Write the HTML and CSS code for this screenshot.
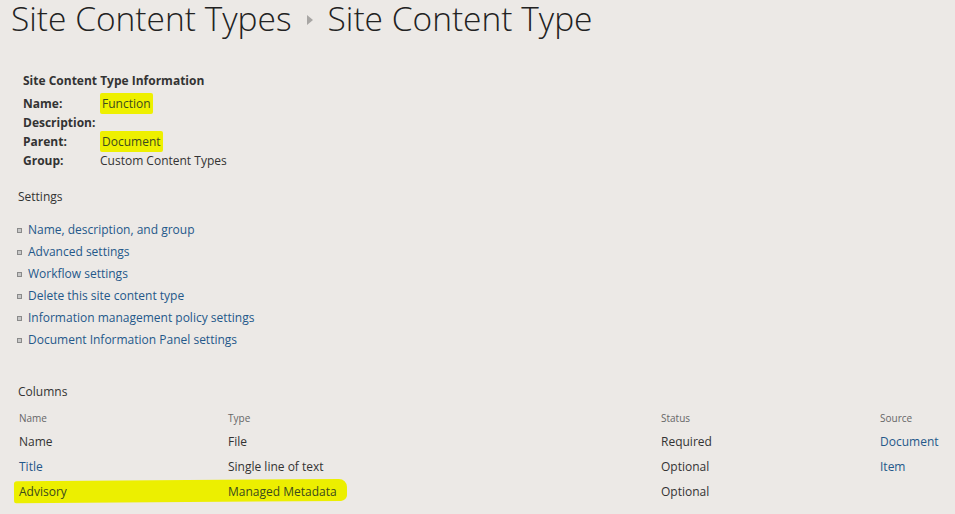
FILE: index.html
```html
<!DOCTYPE html>
<html lang="en">
<head>
    <meta charset="UTF-8">
    <title>Site Content Type</title>
    <link rel="stylesheet" href="styles.css">
</head>
<body>

    <h1 class="page-title">
        <span>Site Content Types</span>
        <svg class="crumb-arrow" width="6" height="10" viewBox="0 0 6 10"><path d="M0 0 L6 5 L0 10 Z" fill="#a8a6a4"/></svg>
        <span>Site Content Type</span>
    </h1>

    <div class="info">
        <h3>Site Content Type Information</h3>
        <div class="info-row"><span class="label">Name:</span><span class="value"><mark>Function</mark></span></div>
        <div class="info-row"><span class="label">Description:</span><span class="value"></span></div>
        <div class="info-row"><span class="label">Parent:</span><span class="value"><mark>Document</mark></span></div>
        <div class="info-row"><span class="label">Group:</span><span class="value">Custom Content Types</span></div>
    </div>

    <h4 class="section">Settings</h4>
    <ul class="settings">
        <li><a href="#">Name, description, and group</a></li>
        <li><a href="#">Advanced settings</a></li>
        <li><a href="#">Workflow settings</a></li>
        <li><a href="#">Delete this site content type</a></li>
        <li><a href="#">Information management policy settings</a></li>
        <li><a href="#">Document Information Panel settings</a></li>
    </ul>

    <h4 class="section columns-title">Columns</h4>
    <div class="columns">
        <div class="col-row head">
            <span>Name</span><span>Type</span><span>Status</span><span>Source</span>
        </div>
        <div class="col-row">
            <span>Name</span><span>File</span><span>Required</span><span><a href="#">Document</a></span>
        </div>
        <div class="col-row">
            <span><a href="#">Title</a></span><span>Single line of text</span><span>Optional</span><span><a href="#">Item</a></span>
        </div>
        <div class="col-row marked">
            <span><a href="#">Advisory</a></span><span>Managed Metadata</span><span>Optional</span><span></span>
        </div>
    </div>

</body>
</html>
```

FILE: styles.css
```css
body {
    margin: 0;
    padding: 0 0 0 11px;
    background-color: #ece9e6;
    font-family: "Open Sans", Arial, sans-serif;
    font-size: 12px;
    color: #333;
}
a {
    color: #24588a;
    text-decoration: none;
}
mark {
    background-color: #eef000;
    color: #3c4a1e;
    padding: 2px 2px;
    border-radius: 2px;
}

/* Title */
.page-title {
    margin: 0;
    padding-top: 1px;
    font-size: 33.5px;
    font-weight: 300;
    color: #222;
    line-height: 34px;
    display: flex;
    align-items: center;
    gap: 15px;
}
.crumb-arrow {
    margin-top: 4px;
}

/* Info block */
.info {
    margin: 37px 0 0 12px;
}
.info h3 {
    margin: 0 0 4px 0;
    font-size: 12px;
    font-weight: bold;
    line-height: 18px;
}
.info-row {
    display: flex;
    line-height: 19px;
}
.info-row .label {
    width: 77px;
    font-weight: bold;
}

/* Settings */
.section {
    margin: 0;
    font-weight: normal;
    font-size: 12px;
    line-height: 18px;
    margin-left: 7px;
}
.info + .section {
    margin-top: 18px;
}
.settings {
    list-style: none;
    margin: 13px 0 0 6px;
    padding: 0;
}
.settings li {
    display: flex;
    align-items: center;
    gap: 6px;
    line-height: 22px;
}
.settings li::before {
    content: "";
    width: 3px;
    height: 3px;
    border: 1px solid #8a8a8a;
    background-color: #c8c8c8;
}

/* Columns table */
.columns-title {
    margin-top: 32px;
}
.columns {
    margin: 8px 0 0 8px;
}
.col-row {
    display: grid;
    grid-template-columns: 209px 433px 219px auto;
    line-height: 25px;
    position: relative;
}
.col-row span {
    position: relative;
    z-index: 1;
}
.col-row.head {
    font-size: 10px;
    color: #666;
    line-height: 18px;
    margin-bottom: 2px;
}
.col-row.marked::before {
    content: "";
    position: absolute;
    left: -5px;
    top: 1px;
    width: 333px;
    height: 22px;
    background-color: #ecef00;
    border-radius: 3px 8px 6px 2px;
    transform: rotate(-0.4deg);
}
.col-row.marked a,
.col-row.marked span {
    color: #3a4a1e;
}
.col-row.marked span:nth-child(3) {
    color: #333;
}
```
